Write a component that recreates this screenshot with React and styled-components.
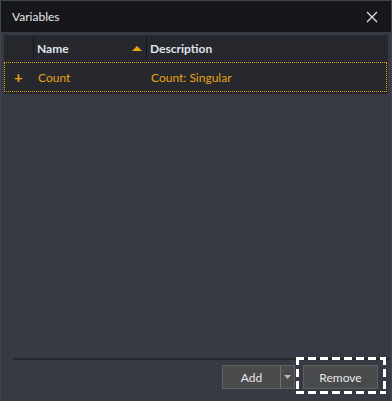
import React from "react";
import styled, { createGlobalStyle } from "styled-components";

const Global = createGlobalStyle`
  html, body { margin: 0; padding: 0; background: #373a42; }
  body { font-family: Lato, "Open Sans", "Liberation Sans", sans-serif; }
`;

const Window = styled.div`
  width: 392px;
  height: 401px;
  box-sizing: border-box;
  border: 1px solid #43464e;
  border-bottom: none;
  background: #373a42;
  display: flex;
  flex-direction: column;
`;

const TitleBar = styled.div`
  height: 31px;
  background: #16171b;
  display: flex;
  align-items: center;
  justify-content: space-between;
  padding: 0 13px 0 11px;
  color: #e6e6e6;
  font-size: 12px;
`;

const CloseBtn = styled.div`
  width: 12px;
  height: 12px;
  display: flex;
`;

const Body = styled.div`
  flex: 1;
  display: flex;
  flex-direction: column;
  padding: 3px 3px 0 3px;
`;

const Grid = styled.div`
  background: #26282e;
  display: flex;
  flex-direction: column;
  padding-bottom: 2px;
`;

const HeaderRow = styled.div`
  display: grid;
  grid-template-columns: 29px 113px 1fr;
  height: 27px;
  align-items: center;
`;

const HeadCell = styled.div`
  height: 23px;
  display: flex;
  align-items: center;
  justify-content: space-between;
  border-left: ${(p) => (p.$divider ? "1px solid #15161a" : "none")};
  padding-left: 3px;
  padding-right: 4px;
  color: #dfe3ea;
  font-weight: 700;
  font-size: 12px;
`;

const DataRow = styled.div`
  display: grid;
  grid-template-columns: 30px 113px 1fr;
  height: 30px;
  box-sizing: border-box;
  align-items: center;
  border: 1px dotted #e6a313;
  color: #e6a313;
  font-size: 12px;
  margin-right: 1px;
`;

const PlusCell = styled.div`
  font-weight: 700;
  font-size: 15px;
  padding-left: 9px;
  line-height: 1;
`;

const Cell = styled.div`
  padding-left: 3px;
`;

const Spacer = styled.div`
  flex: 1;
`;

const Footer = styled.div`
  margin-left: 9px;
  margin-right: -1px;
  border-top: 2px solid #25272b;
  height: 43px;
  display: flex;
  justify-content: flex-end;
  align-items: flex-start;
  padding-top: 5px;
  padding-right: 3px;
  box-sizing: border-box;
  gap: 1px;
`;

const SplitButton = styled.div`
  display: flex;
`;

const Btn = styled.div`
  box-sizing: border-box;
  height: 24px;
  width: ${(p) => p.$w}px;
  background: #484a4c;
  border: 1px solid #5f6163;
  color: #e8e8e8;
  font-size: 12px;
  display: flex;
  align-items: center;
  justify-content: center;
`;

const Arrow = styled(Btn)`
  border-left: 1px solid #707274;
  margin-left: -1px;
`;

const Focus = styled.div`
  margin-top: -8px;
  display: flex;
  padding: 8px 8px 5px 7px;
  background-image:
    repeating-linear-gradient(90deg, #fff 0 8px, transparent 8px 12px),
    repeating-linear-gradient(90deg, #fff 0 8px, transparent 8px 12px),
    repeating-linear-gradient(180deg, #fff 0 8px, transparent 8px 12px),
    repeating-linear-gradient(180deg, #fff 0 8px, transparent 8px 12px);
  background-size: 100% 3px, 100% 3px, 3px 100%, 3px 100%;
  background-position: 0 0, 0 100%, 0 0, 100% 0;
  background-repeat: no-repeat;
`;

export default function App() {
  return (
    <>
      <Global />
      <Window>
        <TitleBar>
          <span>Variables</span>
          <CloseBtn>
            <svg width="12" height="12" viewBox="0 0 12 12">
              <path d="M1 1 L11 11 M11 1 L1 11" stroke="#e0e0e0" strokeWidth="1.3" />
            </svg>
          </CloseBtn>
        </TitleBar>
        <Body>
          <Grid>
            <HeaderRow>
              <div />
              <HeadCell $divider>
                <span>Name</span>
                <svg width="10" height="5" viewBox="0 0 10 5">
                  <path d="M0 5 L5 0 L10 5 Z" fill="#e6a313" />
                </svg>
              </HeadCell>
              <HeadCell $divider>
                <span>Description</span>
              </HeadCell>
            </HeaderRow>
            <DataRow>
              <PlusCell>+</PlusCell>
              <Cell>Count</Cell>
              <Cell>Count: Singular</Cell>
            </DataRow>
          </Grid>
          <Spacer />
          <Footer>
            <SplitButton>
              <Btn $w={59}>Add</Btn>
              <Arrow $w={15}>
                <svg width="7" height="4" viewBox="0 0 7 4">
                  <path d="M0 0 L7 0 L3.5 4 Z" fill="#b8b8b8" />
                </svg>
              </Arrow>
            </SplitButton>
            <Focus>
              <Btn $w={75}>Remove</Btn>
            </Focus>
          </Footer>
        </Body>
      </Window>
    </>
  );
}
